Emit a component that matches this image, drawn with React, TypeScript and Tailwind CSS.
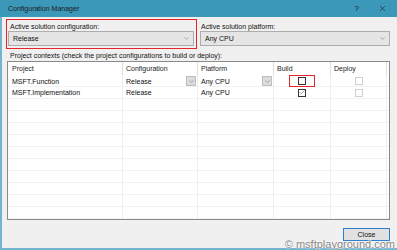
import { Check, ChevronDown, X } from 'lucide-react'

const font = { fontFamily: '"Liberation Sans", Arial, sans-serif' }

const cols = 'grid grid-cols-[114px_75px_76px_57px_56px_1fr]'

const rows = [
  { project: 'MSFT.Function', config: 'Release', platform: 'Any CPU', build: false, active: true },
  { project: 'MSFT.Implementation', config: 'Release', platform: 'Any CPU', build: true, active: false },
]

function Select({ value, width }: { value: string; width: string }) {
  return (
    <div className={`${width} h-[15px] flex items-center justify-between bg-[#e5e5e5] border border-[#adadad] pl-[4px] pr-[3px]`}>
      <span>{value}</span>
      <ChevronDown size={7} strokeWidth={1.5} className="text-[#555]" />
    </div>
  )
}

function Box({ checked, disabled }: { checked?: boolean; disabled?: boolean }) {
  return (
    <span
      className={`w-[8px] h-[8px] flex items-center justify-center bg-white border ${
        disabled ? 'border-[#cfcfcf]' : 'border-[#333333]'
      }`}
    >
      {checked && <Check size={7} strokeWidth={2} className="text-[#333]" />}
    </span>
  )
}

function DropButton() {
  return (
    <span className="w-[10px] h-[10px] flex items-center justify-center bg-[#dcdcdc] border border-[#bdbdbd]">
      <ChevronDown size={7} strokeWidth={1.5} className="text-[#555]" />
    </span>
  )
}

export default function App() {
  return (
    <div className="w-[397px] h-[250px] relative flex flex-col bg-[#f0f0f0] text-[7px] leading-none text-[#111]" style={font}>
      {/* title bar */}
      <div className="h-[17px] shrink-0 flex items-center justify-between bg-[#3c98b9] pl-[8px] pr-[10px] text-[#1a1a1a]">
        <span className="text-[7px]">Configuration Manager</span>
        <div className="flex items-center gap-[19px]">
          <span className="text-[8px]">?</span>
          <X size={9} strokeWidth={1.5} className="text-[#1a1a1a]" />
        </div>
      </div>

      <div className="flex-1 flex flex-col border-l-[2px] border-b-[2px] border-[#74b4cf] pl-[4px] pr-[7px]">
        {/* active solution selectors */}
        <div className="flex gap-[3px] mt-[2px]">
          <div className="w-[191px] h-[30px] border border-[#e5232a] pt-[1px] pl-[1px] flex flex-col">
            <span className="h-[10px] flex items-center pl-[2px]">Active solution configuration:</span>
            <Select value="Release" width="w-[186px]" />
          </div>
          <div className="w-[190px] pt-[2px] flex flex-col">
            <span className="h-[10px] flex items-center pl-[1px]">Active solution platform:</span>
            <Select value="Any CPU" width="w-[190px]" />
          </div>
        </div>

        <div className="h-[12px] flex items-center pl-[4px]">
          Project contexts (check the project configurations to build or deploy):
        </div>

        {/* project grid */}
        <div className="ml-[1px] h-[159px] shrink-0 bg-white border border-[#8a8a8a] overflow-hidden">
          <div className={`${cols} h-[13px] text-[#222]`}>
            <span className="pl-[4px] flex items-center">Project</span>
            <span className="pl-[3px] flex items-center border-l border-[#dedede]">Configuration</span>
            <span className="pl-[3px] flex items-center border-l border-[#dedede]">Platform</span>
            <span className="pl-[3px] flex items-center border-l border-[#dedede]">Build</span>
            <span className="pl-[3px] flex items-center border-l border-[#dedede]">Deploy</span>
            <span className="border-l border-[#dedede]" />
          </div>
          {rows.map((r) => (
            <div key={r.project} className={`${cols} h-[12px] border-b border-[#f2f2f2]`}>
              <span className="pl-[4px] flex items-center">{r.project}</span>
              <span className="pl-[3px] pr-[1px] flex items-center justify-between border-l border-[#e8f0f5]">
                {r.config}
                {r.active && <DropButton />}
              </span>
              <span className="pl-[3px] pr-[1px] flex items-center justify-between border-l border-[#e8f0f5]">
                {r.platform}
                {r.active && <DropButton />}
              </span>
              <span className="flex items-center justify-center border-l border-[#e8f0f5]">
                {r.active ? (
                  <span className="w-[26px] h-[12px] flex items-center justify-center border border-[#e5232a]">
                    <Box />
                  </span>
                ) : (
                  <Box checked={r.build} />
                )}
              </span>
              <span className="flex items-center justify-center border-l border-[#e8f0f5]">
                <Box disabled />
              </span>
              <span className="border-l border-[#e8f0f5]" />
            </div>
          ))}
          {Array.from({ length: 10 }).map((_, i) => (
            <div key={i} className={`${cols} h-[12px] border-b border-[#f2f2f2]`}>
              <span />
              <span className="border-l border-[#e8f0f5]" />
              <span className="border-l border-[#e8f0f5]" />
              <span className="border-l border-[#e8f0f5]" />
              <span className="border-l border-[#e8f0f5]" />
              <span className="border-l border-[#e8f0f5]" />
            </div>
          ))}
        </div>

        <div className="flex justify-end mt-[8px]">
          <button className="w-[47px] h-[13px] flex items-center justify-center bg-[#e1e1e1] border border-[#2b7fd0] text-[7px]">
            Close
          </button>
        </div>
      </div>

      {/* watermark */}
      <span
        className="absolute right-[2px] bottom-[0px] text-[11px] leading-none text-[#858585]"
        style={{ fontFamily: '"Liberation Sans", Arial, sans-serif', textShadow: '0 0 1px #fff, 0 0 1px #fff, 0 0 2px #fff' }}
      >
        © msftplayground.com
      </span>
    </div>
  )
}
